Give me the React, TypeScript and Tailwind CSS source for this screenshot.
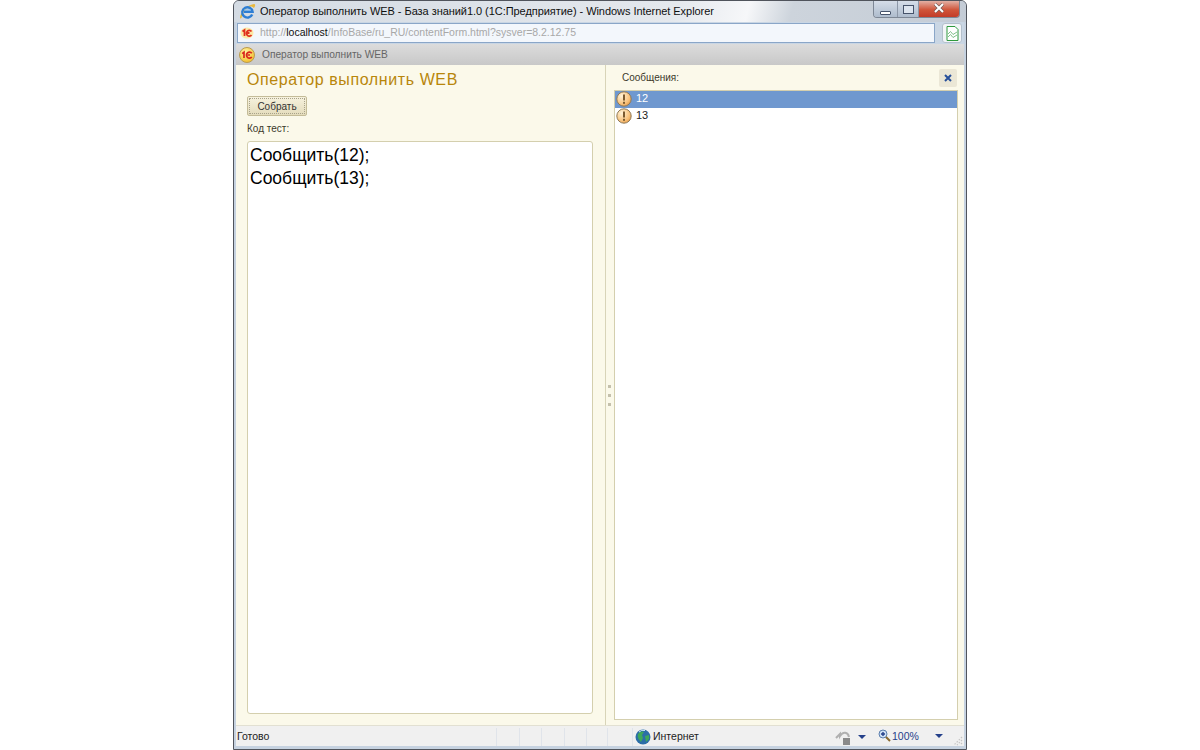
import React from 'react';

const OneCIcon = () => (
  <svg width="16" height="16" viewBox="0 0 16 16">
    <defs>
      <radialGradient id="onec" cx="0.4" cy="0.3" r="0.8">
        <stop offset="0" stopColor="#fff2a0" />
        <stop offset="1" stopColor="#f2b820" />
      </radialGradient>
    </defs>
    <circle cx="8" cy="8" r="7.5" fill="url(#onec)" stroke="#b89a50" strokeWidth="1" />
    <path d="M3.2 6.6 L5 5.2 V11 M12.8 6.2 A3 3 0 1 0 12.8 10 M11 8 H8.6" fill="none" stroke="#d8261c" strokeWidth="1.7" />
  </svg>
);

const SmallOneC = () => (
  <svg width="14" height="12" viewBox="0 0 14 12">
    <ellipse cx="7" cy="6" rx="6.5" ry="5.5" fill="#fbe9a8" />
    <path d="M2.5 4.5 L4.5 3 V9 M11.5 4.5 A2.8 2.8 0 1 0 11.5 8 M9.5 6 H7.5" fill="none" stroke="#e0301e" strokeWidth="1.8" />
  </svg>
);

const IeIcon = () => (
  <svg width="17" height="17" viewBox="0 0 17 17">
    <path d="M1 15.5 C1 9 8 2 15 1 C16.5 1 16.5 3 15 5 L13.5 4 C9 2 4 8 2.5 15 Z" fill="#e8b83c" />
    <path d="M13.2 11.5 A5.2 5.2 0 1 1 13.6 8.8 H5" fill="none" stroke="#2d7ed4" strokeWidth="2.4" />
    <path d="M5 7 H12" stroke="#7fbaf0" strokeWidth="1" />
  </svg>
);

const WarnIcon = () => (
  <svg width="16" height="16" viewBox="0 0 16 16">
    <defs>
      <radialGradient id="warn" cx="0.35" cy="0.3" r="0.9">
        <stop offset="0" stopColor="#fff3d8" />
        <stop offset="0.6" stopColor="#f8c27c" />
        <stop offset="1" stopColor="#e0882c" />
      </radialGradient>
    </defs>
    <circle cx="8" cy="8" r="7.2" fill="url(#warn)" stroke="#8f7a58" strokeWidth="1" />
    <path d="M8 3.5 V9.5" stroke="#7a5a30" strokeWidth="2" />
    <rect x="7" y="10.8" width="2" height="2" fill="#7a5a30" />
  </svg>
);

const GlobeIcon = () => (
  <svg width="16" height="16" viewBox="0 0 16 16">
    <circle cx="8" cy="8" r="7.5" fill="#2c6ea8" />
    <path d="M3 5 C5 2 8 2 9 3 L7 6 L8 9 L6 13 C4 11 2 8 3 5Z M10 7 L14 6 L14 10 L11 13 Z" fill="#3fa85a" />
    <path d="M4 3 A6 6 0 0 1 10 1.5" stroke="#cfe6f7" strokeWidth="1" fill="none" />
  </svg>
);

const App = () => {
  return (
    <div className="h-[750px] bg-white flex justify-center font-['Liberation_Sans',sans-serif] overflow-hidden">
      <div className="w-[734px] h-[750px] flex flex-col rounded-t-[6px] border border-[#50545c] bg-[#c6d2e0] px-[2px] pb-[3px]">
        {/* Title bar */}
        <div className="h-[21px] -mx-[2px] pl-[5px] flex items-center bg-[linear-gradient(105deg,#d4dbe3_0%,#e4e8ed_60%,#f6f7f9_70%,#cdd4dc_76%,#c4ccd6_100%)] rounded-t-[5px]">
          <IeIcon />
          <span className="ml-[4px] text-[11px] tracking-[-0.05px] text-[#101010] whitespace-nowrap">
            Оператор выполнить WEB - База знаний1.0 (1С:Предприятие) - Windows Internet Explorer
          </span>
          <div className="ml-auto mr-[6px] self-start flex h-[17px] rounded-b-[4px] border border-t-0 border-[#7d8795] overflow-hidden">
            <div className="w-[24px] bg-[linear-gradient(#d5dde8,#aebccd)] border-r border-[#8d98a8] flex items-end justify-center pb-[2px]">
              <div className="w-[11px] h-[4px] border border-[#46536a] bg-white rounded-[1px]" />
            </div>
            <div className="w-[21px] bg-[linear-gradient(#d5dde8,#aebccd)] border-r border-[#8d98a8] flex items-center justify-center">
              <div className="w-[11px] h-[9px] border border-[#46536a] bg-[#dce4ee]" />
            </div>
            <div className="w-[40px] bg-[linear-gradient(#e2b0a4,#d0553a_55%,#c23c28)] flex items-center justify-center pb-[3px]">
              <svg width="12" height="10" viewBox="0 0 12 10">
                <path d="M2 1 L10 9 M10 1 L2 9" stroke="#6e5a58" strokeWidth="3.2" />
                <path d="M2 1 L10 9 M10 1 L2 9" stroke="#ffffff" strokeWidth="2" />
              </svg>
            </div>
          </div>
        </div>

        {/* Address row */}
        <div className="h-[22px] flex items-center bg-[#c9d6e4] pr-[2px]">
          <div className="w-[698px] ml-[1px] h-[20px] border border-[#8aa6c8] bg-[#f3f7fc] flex items-center pl-[2px] text-[10.5px] text-[#a8a8a8] whitespace-nowrap">
            <SmallOneC />
            <span className="ml-[6px]">
              http://<span className="text-[#111]">localhost</span>/InfoBase/ru_RU/contentForm.html?sysver=8.2.12.75
            </span>
          </div>
          <div className="ml-auto w-[20px] h-[20px] rounded-[3px] border border-[#b4c0cc] bg-[#f2f5f8] flex items-center justify-center">
            <svg width="13" height="15" viewBox="0 0 13 15">
              <path d="M1 .5 H9 L12 3.5 V14.5 H1 Z" fill="#fff" stroke="#2f9a3e" />
              <path d="M2 8 L4.5 5.5 L7 8.5 L11 6 M2 11 L4.5 8.5 L7 11.5 L11 9" fill="none" stroke="#7fbf8a" />
            </svg>
          </div>
        </div>

        {/* Tab row */}
        <div className="h-[21px] flex items-center pl-[3px] bg-[linear-gradient(#dcdcdc,#c8c8c8)] text-[10.2px] text-[#666]">
          <OneCIcon />
          <span className="ml-[7px]">Оператор выполнить WEB</span>
        </div>

        {/* Content */}
        <div className="flex-1 flex min-h-0 bg-[#fbf9ea] text-[#3c3a2a]">
          {/* Left panel */}
          <div className="w-[369px] shrink-0 flex flex-col pl-[11px] pr-[12px] pb-[11px]">
            <h1 className="h-[31px] pb-[2px] flex items-center text-[16px] tracking-[0.6px] text-[#b8860b]">Оператор выполнить WEB</h1>
            <button className="w-[60px] h-[20px] rounded-[2px] border border-[#c4bc98] bg-[linear-gradient(#f6f2de,#e4dcbc)] text-[10px] text-[#333] outline-1 outline-dotted -outline-offset-3 outline-[#a8a28a]">
              Собрать
            </button>
            <div className="h-[25px] flex items-center text-[10px] text-[#3c3a2a]">Код тест:</div>
            <div className="flex-1 rounded-[3px] border border-[#d4cfae] bg-white px-[2px] pt-[2px] text-[17.5px] leading-[23px] text-black">
              <div>Сообщить(12);</div>
              <div>Сообщить(13);</div>
            </div>
          </div>

          {/* Splitter */}
          <div className="w-[8px] shrink-0 border-l border-[#d8d4b8] flex flex-col justify-center items-center gap-[6px]">
            <span className="w-[3px] h-[3px] bg-[#c4c0ac]" />
            <span className="w-[3px] h-[3px] bg-[#c4c0ac]" />
            <span className="w-[3px] h-[3px] bg-[#c4c0ac]" />
          </div>

          {/* Right panel */}
          <div className="flex-1 flex flex-col pl-[1px] pr-[6px] pb-[5px] min-w-0">
            <div className="h-[25px] flex items-center justify-between pl-[8px] pr-[1px]">
              <span className="text-[10px]">Сообщения:</span>
              <div className="w-[18px] h-[18px] rounded-[2px] bg-[#ebe7d6] flex items-center justify-center">
                <svg width="8" height="8" viewBox="0 0 8 8">
                  <path d="M1 1 L7 7 M7 1 L1 7" stroke="#27509a" strokeWidth="2" />
                </svg>
              </div>
            </div>
            <div className="flex-1 border border-[#d4cfae] bg-white text-[11px]">
              <div className="h-[17px] pb-[1px] flex items-center pl-[1px] bg-[#6f98cf] text-white">
                <WarnIcon />
                <span className="ml-[4px] -mt-[2px]">12</span>
              </div>
              <div className="h-[17px] pb-[1px] flex items-center pl-[1px] text-[#222]">
                <WarnIcon />
                <span className="ml-[4px] -mt-[2px]">13</span>
              </div>
            </div>
          </div>
        </div>

        {/* Status bar */}
        <div className="h-[21px] pt-[2px] flex items-center bg-[#f0f0f0] border-t border-[#e2e0d2] text-[10.5px] text-[#222]">
          <span className="ml-[1px] w-[259px]">Готово</span>
          <div className="h-[18px] w-[23px] border-l border-[#e0e4ea]" />
          <div className="h-[18px] w-[22px] border-l border-[#e0e4ea]" />
          <div className="h-[18px] w-[23px] border-l border-[#e0e4ea]" />
          <div className="h-[18px] w-[22px] border-l border-[#e0e4ea]" />
          <div className="h-[18px] w-[21px] border-l border-[#e0e4ea]" />
          <div className="h-[18px] w-[25px] border-l border-[#e0e4ea]" />
          <div className="h-[18px] border-l border-[#e0e4ea] flex items-center pl-[2px]">
            <GlobeIcon />
            <span className="ml-[2px] w-[182px]">Интернет</span>
          </div>
          <svg width="16" height="15" viewBox="0 0 16 15">
            <path d="M1 8 L5 4 V6 C8 1 13 2 14 7" fill="none" stroke="#b0b0b0" strokeWidth="2" />
            <rect x="8" y="8" width="7" height="7" fill="#8a8a8a" />
          </svg>
          <span className="ml-[7px] w-0 h-0 border-x-[4px] border-x-transparent border-t-[4px] border-t-[#24408a]" />
          <svg className="ml-[12px] -mt-[3px]" width="13" height="13" viewBox="0 0 13 13">
            <circle cx="5" cy="5" r="4" fill="#cfe0f4" stroke="#5c7fae" />
            <path d="M3 5 H7 M5 3 V7" stroke="#24408a" strokeWidth="1.4" />
            <path d="M8 8 L12 12" stroke="#8a6a30" strokeWidth="2" />
          </svg>
          <span className="ml-[1px] text-[#24408a]">100%</span>
          <span className="ml-[16px] -mt-[3px] w-0 h-0 border-x-[4px] border-x-transparent border-t-[4px] border-t-[#24408a]" />
          <svg className="ml-auto mr-[1px] self-end" width="12" height="12" viewBox="0 0 12 12">
            <path d="M11 3 L3 11 M11 6 L6 11 M11 9 L9 11" stroke="#c4c4c4" strokeWidth="1.2" strokeDasharray="1.5 1.5" />
          </svg>
        </div>
      </div>
    </div>
  );
};

export default App;
